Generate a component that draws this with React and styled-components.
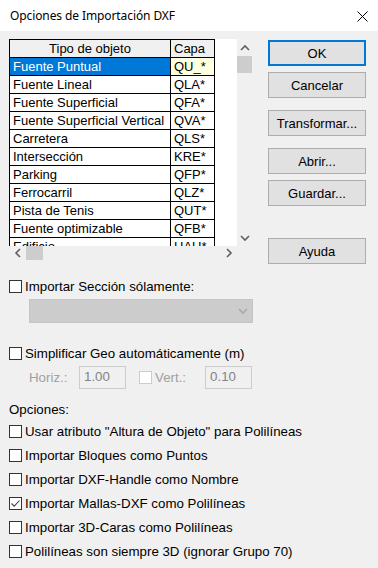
import React from "react";
import styled, { createGlobalStyle } from "styled-components";

const Global = createGlobalStyle`
  html, body { margin: 0; padding: 0; background: #f0f0f0; }
  body { width: 378px; height: 568px; overflow: hidden; }
  * { box-sizing: border-box; }
`;

const Dialog = styled.div`
  width: 378px;
  height: 568px;
  background: #f0f0f0;
  display: flex;
  flex-direction: column;
  font-family: "Liberation Sans", Arial, sans-serif;
  font-size: 13px;
  color: #000;
  position: relative;
  overflow: hidden;
`;

const TitleBar = styled.div`
  height: 31px;
  background: #fff;
  display: flex;
  align-items: center;
  justify-content: space-between;
  padding: 0 6px 0 10px;
  flex-shrink: 0;
`;

const Title = styled.span`
  font-family: "Noto Sans", "Open Sans", sans-serif;
  font-size: 12px;
  color: #000;
  letter-spacing: -0.1px;
`;

const CloseBtn = styled.div`
  width: 12px;
  height: 12px;
  display: flex;
  align-items: center;
  justify-content: center;
  margin-right: 4px;
  margin-top: 1px;
`;

const Body = styled.div`
  padding: 8px 0 0 9px;
  display: flex;
  flex-direction: column;
`;

const TopRow = styled.div`
  display: flex;
  gap: 16px;
`;

const ListBox = styled.div`
  display: grid;
  grid-template-columns: 228px 15px;
  grid-template-rows: 207px 14px;
  width: 243px;
  height: 221px;
  flex-shrink: 0;
`;

const TableArea = styled.div`
  background: #fff;
  overflow: hidden;
`;

const Table = styled.table`
  border-collapse: collapse;
  table-layout: fixed;
  width: 205px;
`;

const Th = styled.th`
  height: 18px;
  padding: 0 3px;
  border: 1px solid #000;
  background: #f0f0f0;
  font-weight: normal;
  text-align: ${(p) => (p.$center ? "center" : "left")};
  white-space: nowrap;
  overflow: hidden;
  line-height: 16px;
`;

const Td = styled.td`
  height: 18px;
  padding: 0 3px;
  border: 1px solid #000;
  white-space: nowrap;
  overflow: hidden;
  line-height: 16px;
  background: ${(p) => (p.$sel ? "#0078d7" : p.$hl ? "#ffffe1" : "#fff")};
  color: ${(p) => (p.$sel ? "#fff" : "#000")};
`;

const VScroll = styled.div`
  background: #f0f0f0;
  display: flex;
  flex-direction: column;
  align-items: stretch;
`;

const HScroll = styled.div`
  background: #f0f0f0;
  display: flex;
  align-items: stretch;
`;

const Corner = styled.div`
  background: #f0f0f0;
`;

const ArrowCell = styled.div`
  flex: 0 0 17px;
  display: flex;
  align-items: center;
  justify-content: center;
`;

const Spacer = styled.div`
  flex: 1;
`;

const Thumb = styled.div`
  flex: 0 0 17px;
  background: #cdcdcd;
`;

const ButtonCol = styled.div`
  display: flex;
  flex-direction: column;
  padding-top: 1px;
  height: 221px;
`;

const Button = styled.div`
  width: 98px;
  height: 26px;
  flex-shrink: 0;
  margin-top: ${(p) => p.$mt || 0}px;
  background: #e1e1e1;
  border: ${(p) => (p.$default ? "2px solid #0078d7" : "1px solid #adadad")};
  display: flex;
  align-items: center;
  justify-content: center;
  font-size: 13px;
  color: #000;
`;

const CheckRow = styled.div`
  display: flex;
  align-items: center;
  height: 16px;
  font-size: 13.3px;
  margin-top: ${(p) => p.$mt || 0}px;
  color: ${(p) => (p.$disabled ? "#a0a0a0" : "#000")};
  white-space: nowrap;
`;

const Box = styled.div`
  width: 13px;
  height: 13px;
  border: 1px solid ${(p) => (p.$disabled ? "#cccccc" : "#333333")};
  background: #fff;
  margin-right: 3px;
  display: flex;
  align-items: center;
  justify-content: center;
  flex-shrink: 0;
`;

const Combo = styled.div`
  width: 224px;
  height: 24px;
  margin: 5px 0 0 20px;
  background: #cccccc;
  border: 1px solid #c4c4c4;
  display: flex;
  align-items: center;
  justify-content: flex-end;
  padding-right: 4px;
`;

const FieldRow = styled.div`
  display: flex;
  align-items: center;
  margin: 5px 0 0 20px;
  height: 23px;
  font-size: 13.3px;
`;

const FieldLabel = styled.span`
  color: #a0a0a0;
  width: ${(p) => p.$w}px;
`;

const Input = styled.div`
  width: 47px;
  height: 23px;
  border: 1px solid #cccccc;
  background: #f0f0f0;
  color: #838383;
  padding: 2px 0 0 4px;
  line-height: 16px;
  margin-right: ${(p) => p.$mr || 0}px;
`;

const SectionLabel = styled.div`
  margin-top: 13px;
  height: 16px;
  line-height: 16px;
  font-size: 13.3px;
`;

const OptionList = styled.div`
  display: flex;
  flex-direction: column;
  gap: 8px;
  margin-top: 5px;
`;

const Chevron = ({ dir, color = "#606060" }) => {
  const paths = {
    up: "M1 6 L5 2 L9 6",
    down: "M1 2 L5 6 L9 2",
    left: "M6 1 L2 5 L6 9",
    right: "M2 1 L6 5 L2 9",
  };
  const vertical = dir === "up" || dir === "down";
  return (
    <svg width={vertical ? 10 : 8} height={vertical ? 8 : 10} viewBox={vertical ? "0 0 10 8" : "0 0 8 10"}>
      <path d={paths[dir]} fill="none" stroke={color} strokeWidth="1.6" />
    </svg>
  );
};

const Check = ({ checked, disabled, label, mt }) => (
  <CheckRow $mt={mt} $disabled={disabled}>
    <Box $disabled={disabled}>
      {checked && (
        <svg width="11" height="11" viewBox="0 0 11 11">
          <path d="M1.5 5.5 L4.2 8.2 L9.5 2.5" fill="none" stroke="#444" strokeWidth="1.1" />
        </svg>
      )}
    </Box>
    {label}
  </CheckRow>
);

const rows = [
  ["Fuente Puntual", "QU_*"],
  ["Fuente Lineal", "QLA*"],
  ["Fuente Superficial", "QFA*"],
  ["Fuente Superficial Vertical", "QVA*"],
  ["Carretera", "QLS*"],
  ["Intersección", "KRE*"],
  ["Parking", "QFP*"],
  ["Ferrocarril", "QLZ*"],
  ["Pista de Tenis", "QUT*"],
  ["Fuente optimizable", "QFB*"],
  ["Edificio", "HAU*"],
];

const options = [
  ['Usar atributo "Altura de Objeto" para Polilíneas', false],
  ["Importar Bloques como Puntos", false],
  ["Importar DXF-Handle como Nombre", false],
  ["Importar Mallas-DXF como Polilíneas", true],
  ["Importar 3D-Caras como Polilíneas", false],
  ["Polilíneas son siempre 3D (ignorar Grupo 70)", false],
];

export default function App() {
  return (
    <>
      <Global />
      <Dialog>
        <TitleBar>
          <Title>Opciones de Importación DXF</Title>
          <CloseBtn>
            <svg width="11" height="11" viewBox="0 0 11 11">
              <path d="M0.5 0.5 L10.5 10.5 M10.5 0.5 L0.5 10.5" stroke="#000" strokeWidth="1" />
            </svg>
          </CloseBtn>
        </TitleBar>
        <Body>
          <TopRow>
            <ListBox>
              <TableArea>
                <Table>
                  <colgroup>
                    <col style={{ width: 161 }} />
                    <col style={{ width: 44 }} />
                  </colgroup>
                  <thead>
                    <tr>
                      <Th $center>Tipo de objeto</Th>
                      <Th>Capa</Th>
                    </tr>
                  </thead>
                  <tbody>
                    {rows.map(([a, b], i) => (
                      <tr key={a}>
                        <Td $sel={i === 0}>{a}</Td>
                        <Td $hl={i === 0}>{b}</Td>
                      </tr>
                    ))}
                  </tbody>
                </Table>
              </TableArea>
              <VScroll>
                <ArrowCell>
                  <Chevron dir="up" />
                </ArrowCell>
                <Thumb />
                <Spacer />
                <ArrowCell>
                  <Chevron dir="down" />
                </ArrowCell>
              </VScroll>
              <HScroll>
                <ArrowCell>
                  <Chevron dir="left" />
                </ArrowCell>
                <Thumb />
                <Spacer />
                <ArrowCell>
                  <Chevron dir="right" />
                </ArrowCell>
              </HScroll>
              <Corner />
            </ListBox>
            <ButtonCol>
              <Button $default>OK</Button>
              <Button $mt={6}>Cancelar</Button>
              <Button $mt={12}>Transformar...</Button>
              <Button $mt={12}>Abrir...</Button>
              <Button $mt={6}>Guardar...</Button>
              <Button $mt={32}>Ayuda</Button>
            </ButtonCol>
          </TopRow>

          <Check label="Importar Sección sólamente:" mt={18} />
          <Combo>
            <Chevron dir="down" color="#a8a8a8" />
          </Combo>

          <Check label="Simplificar Geo automáticamente (m)" mt={22} />
          <FieldRow>
            <FieldLabel $w={50}>Horiz.:</FieldLabel>
            <Input $mr={13}>1.00</Input>
            <Check disabled label="Vert.:" />
            <FieldLabel $w={19} />
            <Input>0.10</Input>
          </FieldRow>

          <SectionLabel>Opciones:</SectionLabel>
          <OptionList>
            {options.map(([l, c]) => (
              <Check key={l} label={l} checked={c} />
            ))}
          </OptionList>
        </Body>
      </Dialog>
    </>
  );
}
